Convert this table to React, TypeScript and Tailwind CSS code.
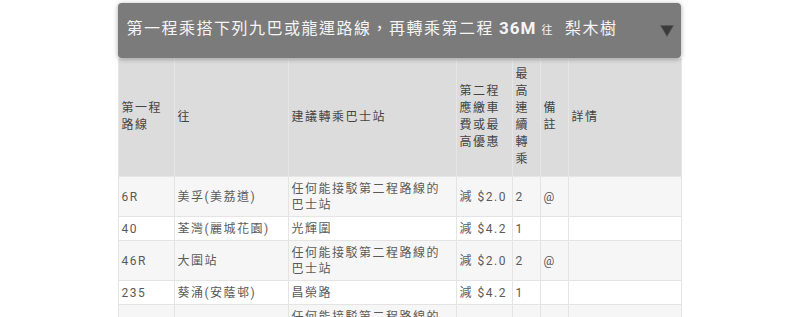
import React from "react";

type Row = { route: string; dest: string; stop: string; fare: string; max: string; note: string; detail: string };

const rows: Row[] = [
  { route: "6R", dest: "美孚(美荔道)", stop: "任何能接駁第二程路線的巴士站", fare: "減 $2.0", max: "2", note: "@", detail: "" },
  { route: "40", dest: "荃灣(麗城花園)", stop: "光輝圍", fare: "減 $4.2", max: "1", note: "", detail: "" },
  { route: "46R", dest: "大圍站", stop: "任何能接駁第二程路線的巴士站", fare: "減 $2.0", max: "2", note: "@", detail: "" },
  { route: "235", dest: "葵涌(安蔭邨)", stop: "昌榮路", fare: "減 $4.2", max: "1", note: "", detail: "" },
  { route: "", dest: "", stop: "任何能接駁第二程路線的巴士站", fare: "", max: "", note: "", detail: "" },
];

const font = { fontFamily: 'Roboto, "Noto Sans CJK TC", "Noto Sans CJK SC", sans-serif' };

export default function App() {
  return (
    <div className="w-full bg-white pt-[3px]" style={font}>
      <div className="mx-auto w-[563px]">
        <div className="relative z-10 flex h-[55px] items-center justify-between rounded-[4px] bg-[#7b7b7b] pl-[9px] pr-[7px] pb-[3px] shadow-[0_1px_5px_rgba(0,0,0,0.35)]">
          <div className="flex items-baseline whitespace-nowrap text-[16px] tracking-[1.5px] text-[#f4f4f4]">
            <span>第一程乘搭下列九巴或龍運路線，再轉乘第二程</span>
            <span className="ml-[5px] text-[17px] font-bold tracking-[1px]">36M</span>
            <span className="ml-[5px] text-[11px]">往</span>
            <span className="ml-[11px]">梨木樹</span>
          </div>
          <svg width="14" height="12" viewBox="0 0 14 12" className="mt-[4px]">
            <polygon points="0.5,0.5 13.5,0.5 7,11.5" fill="#3b3b3b" stroke="#5a5a5a" strokeWidth="0.6" />
          </svg>
        </div>
        <table className="w-[563px] table-fixed border-collapse text-[12px] tracking-[1.5px]">
          <colgroup>
            <col className="w-[56px]" />
            <col className="w-[114px]" />
            <col className="w-[168px]" />
            <col className="w-[56px]" />
            <col className="w-[28px]" />
            <col className="w-[28px]" />
            <col className="w-[113px]" />
          </colgroup>
          <thead>
            <tr className="bg-[#dcdcdc] text-[#444]">
              {["第一程路線", "往", "建議轉乘巴士站", "第二程應繳車費或最高優惠", "最高連續轉乘", "備註", "詳情"].map((h, i) => (
                <th
                  key={i}
                  className="border border-[#e6e6e6] px-[3px] pt-[7px] pb-[8px] text-left align-middle text-[12px] font-normal leading-[17px]"
                >
                  {h}
                </th>
              ))}
            </tr>
          </thead>
          <tbody className="text-[#5a5a5a]">
            {rows.map((r, i) => (
              <tr key={i} className={i % 2 === 0 ? "bg-[#f6f6f6]" : "bg-white"}>
                <td className="border border-[#e4e4e4] px-[3px] pt-[4px] pb-[3px] align-middle leading-[16px]">{r.route}</td>
                <td className="border border-[#e4e4e4] px-[3px] pt-[4px] pb-[3px] align-middle leading-[16px]">{r.dest}</td>
                <td className="border border-[#e4e4e4] px-[3px] pt-[4px] pb-[3px] align-middle leading-[16px]">{r.stop}</td>
                <td className="whitespace-nowrap border border-[#e4e4e4] px-[3px] pt-[4px] pb-[3px] align-middle leading-[16px]">{r.fare}</td>
                <td className="border border-[#e4e4e4] px-[3px] pt-[4px] pb-[3px] align-middle leading-[16px]">{r.max}</td>
                <td className="border border-[#e4e4e4] px-[3px] pt-[4px] pb-[3px] align-middle leading-[16px]">{r.note}</td>
                <td className="border border-[#e4e4e4] px-[3px] pt-[4px] pb-[3px] align-middle leading-[16px]">{r.detail}</td>
              </tr>
            ))}
          </tbody>
        </table>
      </div>
    </div>
  );
}
